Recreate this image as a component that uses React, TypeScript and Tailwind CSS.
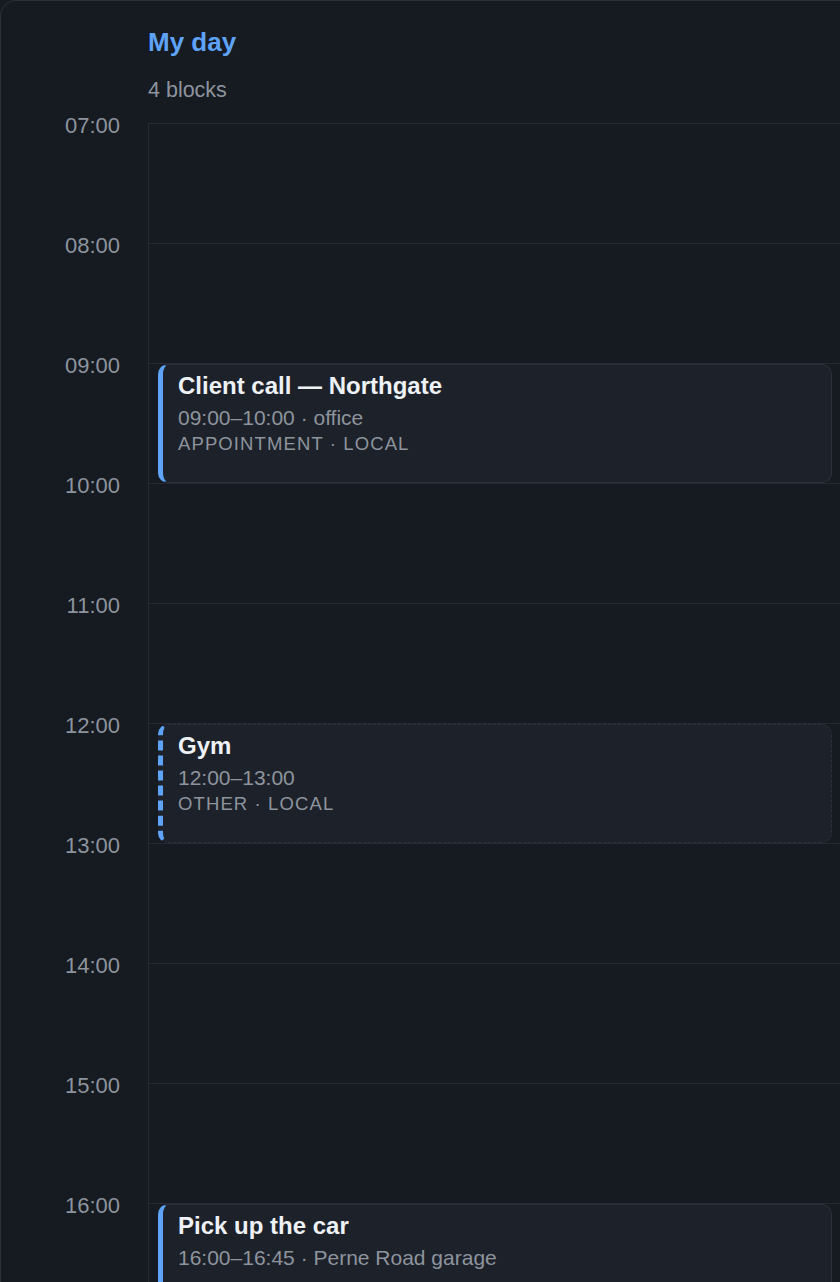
import React from "react";

type Block = {
  title: string;
  start: number;
  end: number;
  time: string;
  place?: string;
  meta?: string;
  dashed?: boolean;
};

const HOUR = 120;
const FIRST = 7;
const hours = Array.from({ length: 10 }, (_, i) => FIRST + i);

const blocks: Block[] = [
  { title: "Client call — Northgate", start: 9, end: 10, time: "09:00–10:00", place: "office", meta: "APPOINTMENT · LOCAL" },
  { title: "Gym", start: 12, end: 13, time: "12:00–13:00", meta: "OTHER · LOCAL", dashed: true },
  { title: "Pick up the car", start: 16, end: 16.75, time: "16:00–16:45", place: "Perne Road garage" },
];

const pad = (n: number) => String(n).padStart(2, "0");

export default function App() {
  return (
    <div
      className="h-[1282px] w-full overflow-hidden bg-[#161a21]"
      style={{ fontFamily: '"Liberation Sans", Arial, Helvetica, sans-serif' }}
    >
      <div className="min-h-full rounded-tl-2xl border-l border-t border-[#2a2f38] bg-[#161a21] pt-[25px]">
        <div className="pl-[147px]">
          <h1 className="text-[26px] font-bold leading-[32px] text-[#5ea3f8]">My day</h1>
          <p className="mt-[18px] text-[21.5px] leading-[28px] text-[#8d949e]">4 blocks</p>
        </div>

        <div className="mt-[19px] flex">
          <div className="w-[147px] shrink-0 pr-[28px]">
            {hours.map((h) => (
              <div key={h} className="flex h-[120px] flex-col items-end">
                <div className="-mt-[11px] text-[22px] leading-[28px] text-[#8d949e]">{pad(h)}:00</div>
              </div>
            ))}
          </div>

          <div className="relative flex-1 border-l border-t border-[#252a33]">
            {hours.map((h) => (
              <div key={h} className="h-[120px] border-b border-[#252a33]" />
            ))}

            {blocks.map((b) => (
              <div
                key={b.title}
                className={
                  "absolute left-[9px] right-[8px] overflow-hidden rounded-[10px] border border-l-[5px] border-[#2b3039] border-l-[#5ea3f8] bg-[#1d2129] pl-[15px] pt-[5px] " +
                  (b.dashed ? "border-dashed" : "border-solid")
                }
                style={{ top: (b.start - FIRST) * HOUR, height: (b.end - b.start) * HOUR - 1 }}
              >
                <div className="text-[24px] font-bold leading-[32px] text-[#eef1f5]">{b.title}</div>
                <div className="mt-[2px] text-[21px] leading-[28px] text-[#8d949e]">
                  {b.time}
                  {b.place ? ` · ${b.place}` : ""}
                </div>
                {b.meta ? (
                  <div className="text-[18.5px] leading-[24px] tracking-[0.06em] text-[#8d949e]">{b.meta}</div>
                ) : null}
              </div>
            ))}
          </div>
        </div>
      </div>
    </div>
  );
}
